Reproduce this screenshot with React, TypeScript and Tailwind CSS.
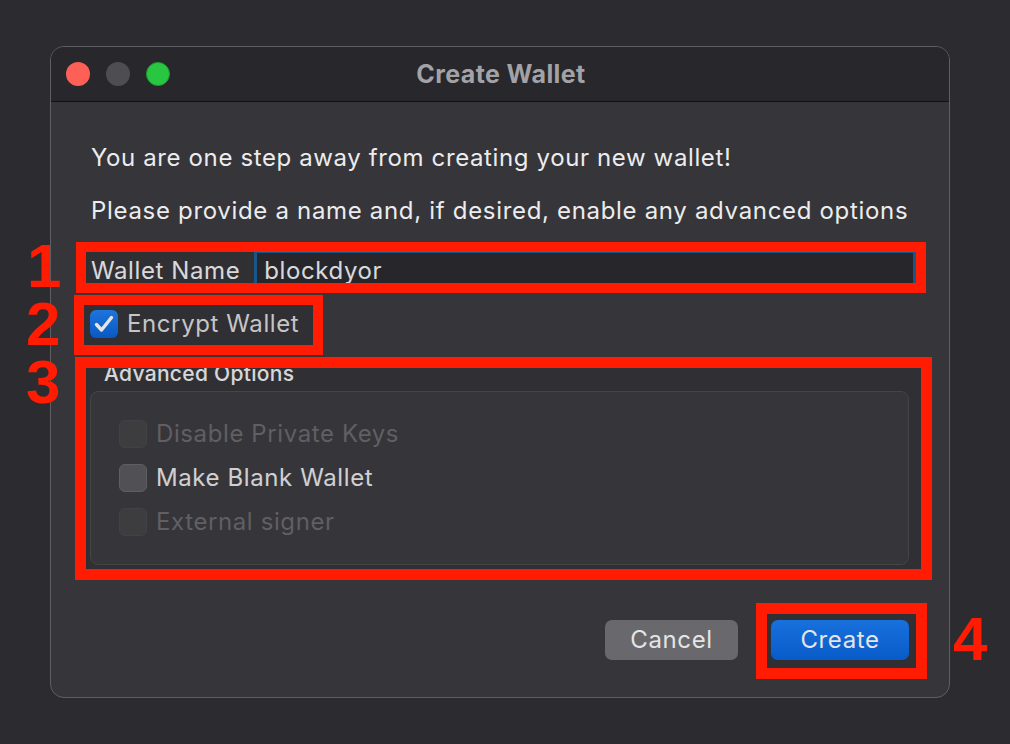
import React from "react";

const font = { fontFamily: "Inter, 'Noto Sans', sans-serif" };

function Check() {
  return (
    <svg width="28" height="28" viewBox="0 0 28 28" fill="none">
      <path d="M6.5 14.5 L11.5 20 L21.5 7.5" stroke="white" strokeWidth="3.4" strokeLinecap="round" strokeLinejoin="round" />
    </svg>
  );
}

function Box({ disabled }: { disabled?: boolean }) {
  return (
    <div
      className={
        disabled
          ? "w-[28px] h-[28px] rounded-[6px] bg-[#454448] border border-[#4a494d]"
          : "w-[28px] h-[28px] rounded-[6px] bg-[#5b5a5f] border border-[#6a696e]"
      }
    />
  );
}

const T = "text-[24px] leading-[28px] tracking-[0.6px]";
const D = "absolute text-[62px] leading-[48px] font-bold text-[#ff1c03]";
const dFont = { fontFamily: "'Liberation Sans', Arial, sans-serif" };

export default function App() {
  return (
    <div className="relative w-[1010px] h-[744px] bg-[#2c2b2f] overflow-hidden pt-[46px] pl-[50px]" style={font}>
      <div className="w-[900px] h-[652px] rounded-[14px] border border-[#5f5e62] bg-[#363539] overflow-hidden flex flex-col">
        {/* title bar */}
        <div className="h-[55px] bg-[#28272b] border-b border-[#111113] grid grid-cols-[1fr_auto_1fr] items-center shrink-0">
          <div className="flex items-center gap-[16px] pl-[15px]">
            <div className="w-[24px] h-[24px] rounded-full bg-[#fe5f57]" />
            <div className="w-[24px] h-[24px] rounded-full bg-[#4e4d52]" />
            <div className="w-[24px] h-[24px] rounded-full bg-[#29c741] border border-[#1c9a2e]" />
          </div>
          <div className="text-[25px] font-bold tracking-[0.4px] text-[#a3a2a7] leading-[28px] pl-[2px]">Create Wallet</div>
          <div />
        </div>
        {/* body */}
        <div className="px-[40px] pt-[42px] flex flex-col">
          <div className="text-[24px] leading-[28px] tracking-[0.62px] text-[#ececee]">You are one step away from creating your new wallet!</div>
          <div className="mt-[25px] text-[24px] leading-[28px] tracking-[0.68px] text-[#ececee] whitespace-nowrap">Please provide a name and, if desired, enable any advanced options</div>
          <div className="mt-[28px] flex items-center h-[36px]">
            <div className={`${T} text-[#f2f2f4]`}>Wallet Name</div>
            <div className={`ml-[17px] mr-[-4px] flex-1 h-[36px] bg-[#2c2b2f] ring-[3px] ring-[#1b5f98] flex items-center pl-[7px] ${T} text-[#f2f2f4]`}>
              blockdyor
            </div>
          </div>
          <div className="mt-[21px] flex items-center h-[28px] gap-[9px] ml-[-1px]">
            <div className="w-[28px] h-[28px] rounded-[6px] bg-gradient-to-b from-[#2182f5] to-[#0b63da] flex items-center justify-center">
              <Check />
            </div>
            <div className={`${T} text-[#dcdcde]`}>Encrypt Wallet</div>
          </div>
          <div className="mt-[24px] ml-[13px] text-[21px] leading-[24px] tracking-[0.3px] font-medium text-[#f0f0f2]">Advanced Options</div>
          <div className="mt-[5px] ml-[-1px] h-[174px] rounded-[8px] border border-[#4d4c50] bg-[#3d3c41] pt-[28px] pl-[28px] flex flex-col gap-[16px]">
            <div className="flex items-center gap-[9px] h-[28px]">
              <Box disabled />
              <div className={`${T} text-[#6b6a6f]`}>Disable Private Keys</div>
            </div>
            <div className="flex items-center gap-[9px] h-[28px]">
              <Box />
              <div className={`${T} text-[#e8e8ea]`}>Make Blank Wallet</div>
            </div>
            <div className="flex items-center gap-[9px] h-[28px]">
              <Box disabled />
              <div className={`${T} text-[#6b6a6f]`}>External signer</div>
            </div>
          </div>
          <div className="mt-[55px] flex justify-end gap-[33px]">
            <button className={`w-[133px] h-[40px] rounded-[7px] bg-[#69686d] ${T} text-[#e4e4e6]`}>Cancel</button>
            <button className={`w-[138px] h-[40px] rounded-[7px] bg-gradient-to-b from-[#1b7ef6] to-[#0a66e2] ${T} text-white`}>Create</button>
          </div>
        </div>
      </div>

      {/* annotations */}
      <div className="absolute left-[76px] top-[242px] w-[850px] h-[51px] border-[10px] border-[#ff1c03] bg-black/10" />
      <div className="absolute left-[74px] top-[295px] w-[249px] h-[60px] border-[10px] border-[#ff1c03] bg-black/10" />
      <div className="absolute left-[75px] top-[357px] w-[857px] h-[223px] border-[11px] border-[#ff1c03] bg-black/10" />
      <div className="absolute left-[756px] top-[603px] w-[171px] h-[76px] border-[11px] border-[#ff1c03] bg-black/10" />
      <div className={`${D} left-[27px] top-[242px]`} style={dFont}>1</div>
      <div className={`${D} left-[26px] top-[300px]`} style={dFont}>2</div>
      <div className={`${D} left-[26px] top-[358px]`} style={dFont}>3</div>
      <div className={`${D} left-[953px] top-[615px]`} style={dFont}>4</div>
    </div>
  );
}
